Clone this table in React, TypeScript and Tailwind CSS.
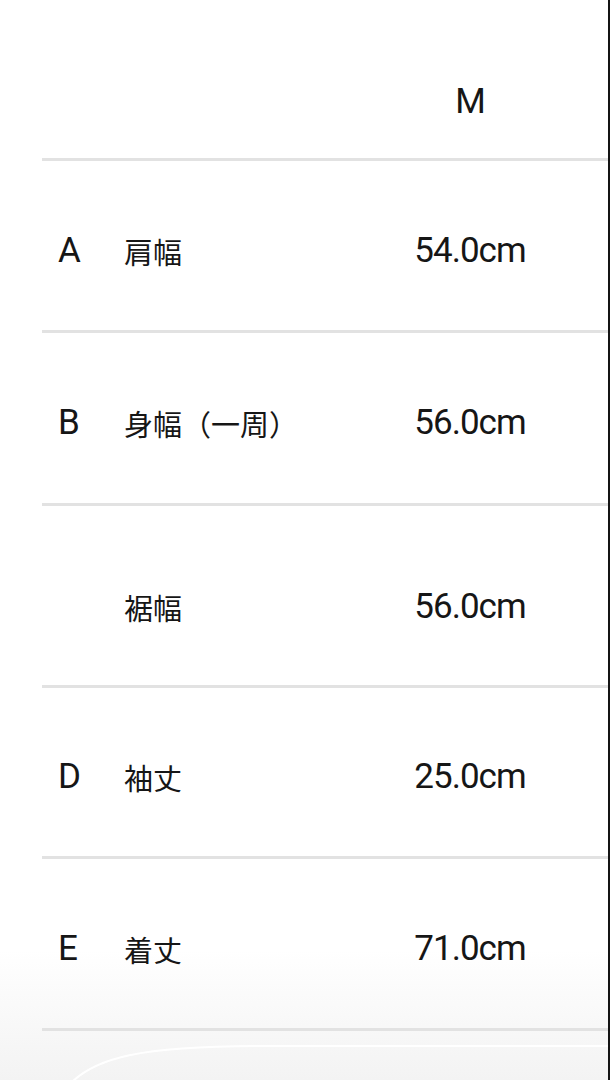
import React from "react";

const rows = [
  { letter: "A", name: "肩幅", value: "54.0cm", h: "h-[172px]", pt: "pt-[10px]" },
  { letter: "B", name: "身幅（一周）", value: "56.0cm", h: "h-[173px]", pt: "pt-[10px]" },
  { letter: "", name: "裾幅", value: "56.0cm", h: "h-[182px]", pt: "pt-[22px]" },
  { letter: "D", name: "袖丈", value: "25.0cm", h: "h-[171px]", pt: "pt-[10px]" },
  { letter: "E", name: "着丈", value: "71.0cm", h: "h-[172px]", pt: "pt-[10px]" },
];

const latin = "font-['Roboto','Noto_Sans_CJK_JP',sans-serif] text-[35px] tracking-[-1px] leading-[40px]";
const cjk = "font-['Noto_Sans_CJK_JP','Noto_Sans',sans-serif] text-[29px] leading-[40px]";

export default function App() {
  return (
    <div className="relative w-[610px] h-[1080px] overflow-hidden bg-gradient-to-b from-white from-[88%] to-[#f3f3f3] border-r-2 border-[#141414] text-[#161616]">
      <div className="pl-[42px]">
        <div className="flex h-[161px] border-b-[3px] border-[#e2e2e2]">
          <div className="w-[82px]" />
          <div className="flex-1" />
          <div className={`w-[200px] pt-[82px] text-center ${latin}`}>M</div>
          <div className="w-[38px]" />
        </div>
        {rows.map((r) => (
          <div key={r.name} className={`flex items-center ${r.h} ${r.pt} border-b-[3px] border-[#e2e2e2]`}>
            <div className={`w-[82px] pl-[16px] ${latin}`}>{r.letter}</div>
            <div className={`flex-1 ${cjk}`}>{r.name}</div>
            <div className={`w-[200px] text-center ${latin}`}>{r.value}</div>
            <div className="w-[38px]" />
          </div>
        ))}
      </div>
      <svg className="absolute left-0 bottom-0" width="610" height="60" viewBox="0 0 610 60">
        <path d="M70 64 C 95 38, 140 26, 260 26 L 610 26" fill="none" stroke="#ffffff" strokeWidth="2" />
      </svg>
    </div>
  );
}
